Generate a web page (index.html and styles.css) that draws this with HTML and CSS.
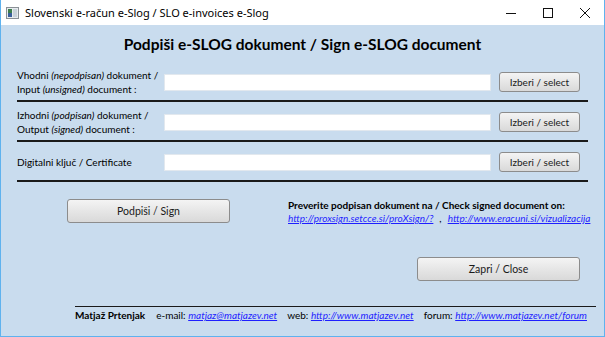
FILE: index.html
```html
<!DOCTYPE html>
<html lang="sl">
<head>
  <meta charset="UTF-8" />
  <title>Slovenski e-račun e-Slog / SLO e-invoices e-Slog</title>
  <link rel="stylesheet" href="styles.css">
</head>
<body>
  <div class="window">
    <div class="titlebar">
      <svg class="app-icon" width="13" height="12" viewBox="0 0 13 12">
        <rect x="0.5" y="0.5" width="12" height="11" fill="#e8ecef" stroke="#8a9096"/>
        <rect x="2" y="2" width="4" height="4" fill="#3c7d4c"/>
        <rect x="2" y="6" width="4" height="4" fill="#3a5f9a"/>
        <rect x="7" y="2" width="4" height="8" fill="#c9d2da"/>
      </svg>
      <span class="window-title">Slovenski e-račun e-Slog / SLO e-invoices e-Slog</span>
      <div class="controls">
        <span class="ctl ctl-min"><svg width="10" height="10" viewBox="0 0 10 10"><path d="M0 5.5H10" stroke="#111" stroke-width="1"/></svg></span>
        <span class="ctl ctl-max"><svg width="10" height="10" viewBox="0 0 10 10"><rect x="0.5" y="0.5" width="9" height="9" fill="none" stroke="#111"/></svg></span>
        <span class="ctl ctl-close"><svg width="10" height="10" viewBox="0 0 10 10"><path d="M0 0L10 10M10 0L0 10" stroke="#111" stroke-width="1"/></svg></span>
      </div>
    </div>

    <div class="content">
      <h1 class="heading">Podpiši e-SLOG dokument / Sign e-SLOG document</h1>

      <div class="file-row">
        <label class="row-label">Vhodni <i>(nepodpisan)</i> dokument /<br>Input <i>(unsigned)</i> document :</label>
        <input type="text" class="path-input">
        <button class="btn btn-select">Izberi / select</button>
      </div>
      <div class="file-row">
        <label class="row-label">Izhodni <i>(podpisan)</i> dokument /<br>Output <i>(signed)</i> document :</label>
        <input type="text" class="path-input">
        <button class="btn btn-select">Izberi / select</button>
      </div>
      <div class="file-row">
        <label class="row-label">Digitalni ključ / Certificate</label>
        <input type="text" class="path-input">
        <button class="btn btn-select">Izberi / select</button>
      </div>

      <div class="actions">
        <button class="btn btn-wide btn-sign">Podpiši / Sign</button>
        <div class="check">
          <div class="check-title">Preverite podpisan dokument na / Check signed document on:</div>
          <div class="check-links">
            <a href="#">http://proxsign.setcce.si/proXsign/?</a>
            <span class="sep">,</span>
            <a href="#">http://www.eracuni.si/vizualizacija</a>
          </div>
        </div>
      </div>

      <div class="close-row">
        <button class="btn btn-wide">Zapri / Close</button>
      </div>
    </div>

    <div class="footer">
      <b class="author">Matjaž Prtenjak</b>
      <span>e-mail: <a href="#">matjaz@matjazev.net</a></span>
      <span>web: <a href="#">http://www.matjazev.net</a></span>
      <span>forum: <a href="#">http://www.matjazev.net/forum</a></span>
    </div>
  </div>
</body>
</html>
```
FILE: styles.css
```css
:root {
  --panel: #c9dcee;
  --frame: #5fb2ee;
  --line: #1a1a1a;
  --link: #1f1fff;
}

body {
  margin: 0;
  font-family: Lato, "Noto Sans", sans-serif;
  font-size: 10px;
  color: #000;
}

.window {
  width: 605px;
  height: 337px;
  box-sizing: border-box;
  border: 1px solid var(--frame);
  border-top: none;
  background: var(--panel);
  display: flex;
  flex-direction: column;
  overflow: hidden;
}

.titlebar {
  height: 25px;
  flex-shrink: 0;
  background: #fff;
  display: flex;
  align-items: center;
  padding-left: 5px;
}

.app-icon {
  margin-right: 6px;
}

.window-title {
  font-family: "Noto Sans", sans-serif;
  font-size: 11px;
  color: #000;
}

.controls {
  margin-left: auto;
  display: flex;
  height: 100%;
}

.ctl {
  display: flex;
  align-items: center;
  justify-content: center;
  height: 100%;
}

.ctl-min { width: 36px; }
.ctl-max { width: 37px; }
.ctl-close { width: 38px; }

.content {
  padding: 0 16px;
}

.heading {
  margin: 9px 0 8px;
  font-size: 15.5px;
  line-height: 20px;
  text-align: center;
}

.file-row {
  display: flex;
  align-items: center;
  min-height: 28px;
  padding: 6px 0 4px;
  border-bottom: 2px solid var(--line);
}

.row-label {
  width: 147px;
  line-height: 14px;
  flex-shrink: 0;
  white-space: nowrap;
}

.path-input {
  flex: 1;
  min-width: 0;
  height: 17px;
  box-sizing: border-box;
  border: 1px solid #e2e8ee;
  background: #fff;
  margin: 0;
  padding: 0 3px;
}

.btn {
  font-family: inherit;
  font-size: 10px;
  color: #1a1a1a;
  border: 1px solid #8c8c8c;
  border-radius: 3px;
  background: linear-gradient(#f4f4f4, #e6e6e6 50%, #d9d9d9);
  padding: 0;
  margin: 0;
  flex-shrink: 0;
}

.btn-select {
  width: 81px;
  height: 20px;
  margin-left: 8px;
  margin-right: 8px;
}

.actions {
  display: flex;
  align-items: flex-start;
  padding-top: 17px;
}

.btn-wide {
  width: 163px;
  height: 24px;
  font-size: 10.5px;
}

.btn-sign {
  margin-left: 50px;
}

.check {
  margin-left: 58px;
  line-height: 13px;
  white-space: nowrap;
}

.check-title {
  font-weight: bold;
}

.check-links {
  display: flex;
  gap: 6px;
}

a {
  color: var(--link);
  font-style: italic;
  text-decoration: underline;
}

.close-row {
  display: flex;
  justify-content: flex-end;
  padding: 32px 8px 0 0;
}

.footer {
  margin: 25px 8px 0 74px;
  border-top: 1px solid var(--line);
  padding-top: 1px;
  line-height: 14px;
  display: flex;
  gap: 10px;
  white-space: nowrap;
}

.author {
  margin-right: 1px;
}
```
